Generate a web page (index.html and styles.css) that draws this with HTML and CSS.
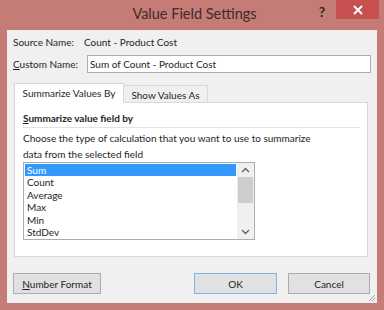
FILE: index.html
```html
<!DOCTYPE html>
<html lang="en">
<head>
    <meta charset="UTF-8">
    <title>Value Field Settings</title>
    <link rel="stylesheet" href="styles.css">
</head>
<body>
    <div class="window">
        <div class="titlebar">
            <div class="title">Value Field Settings</div>
            <div class="help">?</div>
            <div class="close">
                <svg width="10" height="10" viewBox="0 0 10 10"><path d="M1 1L9 9M9 1L1 9" stroke="#fff" stroke-width="2"/></svg>
            </div>
        </div>
        <div class="content">
            <div class="source-row">
                <span class="label">Source Name:</span>
                <span>Count - Product Cost</span>
            </div>
            <div class="custom-row">
                <label class="label" for="customName"><u>C</u>ustom Name:</label>
                <input type="text" id="customName" value="Sum of Count - Product Cost">
            </div>

            <div class="tabs">
                <div class="tab active">Summarize Values By</div>
                <div class="tab">Show Values As</div>
            </div>
            <div class="panel">
                <div class="panel-heading"><u>S</u>ummarize value field by</div>
                <p class="hint">Choose the type of calculation that you want to use to summarize<br>data from the selected field</p>
                <div class="listbox">
                    <ul class="items">
                        <li class="selected">Sum</li>
                        <li>Count</li>
                        <li>Average</li>
                        <li>Max</li>
                        <li>Min</li>
                        <li>StdDev</li>
                    </ul>
                    <div class="scrollbar">
                        <svg width="17" height="14" viewBox="0 0 17 14"><path d="M5 9L8.5 5.5L12 9" fill="none" stroke="#606060" stroke-width="1.3"/></svg>
                        <div class="thumb"></div>
                        <div class="track"></div>
                        <svg width="17" height="14" viewBox="0 0 17 14"><path d="M5 5L8.5 8.5L12 5" fill="none" stroke="#606060" stroke-width="1.3"/></svg>
                    </div>
                </div>
            </div>

            <div class="buttons">
                <button class="btn number"><u>N</u>umber Format</button>
                <button class="btn ok">OK</button>
                <button class="btn cancel">Cancel</button>
            </div>
            <div class="grip">
                <svg width="8" height="8" viewBox="0 0 8 8"><path d="M7 1L1 7M7 4L4 7" stroke="#a0a0a0" stroke-width="1"/></svg>
            </div>
        </div>
    </div>
</body>
</html>
```

FILE: styles.css
```css
body {
    margin: 0;
    padding: 0;
    font-family: Lato, 'Noto Sans', sans-serif;
    font-size: 10px;
    color: rgb(30, 30, 30);
}
.window {
    width: 384px;
    height: 310px;
    box-sizing: border-box;
    background-color: rgb(197, 124, 118);
    padding: 0 7px 7px 7px;
    display: flex;
    flex-direction: column;
}
.titlebar {
    height: 30px;
    display: flex;
    align-items: flex-start;
}
.title {
    flex: 1;
    text-align: center;
    font-size: 14.5px;
    line-height: 28px;
    color: rgb(64, 42, 42);
    padding-left: 70px;
}
.help {
    width: 20px;
    text-align: center;
    font-size: 14px;
    font-weight: bold;
    line-height: 24px;
    color: rgb(50, 40, 40);
    margin-right: 4px;
}
.close {
    width: 43px;
    height: 19px;
    margin-right: -2px;
    background-color: rgb(199, 80, 80);
    display: flex;
    align-items: center;
    justify-content: center;
}
.content {
    flex: 1;
    background-color: rgb(240, 240, 240);
    padding: 0 6px;
    position: relative;
    white-space: nowrap;
}
.source-row {
    height: 24px;
    line-height: 24px;
    display: flex;
}
.label {
    width: 71px;
    flex-shrink: 0;
}
.custom-row {
    margin-top: 1px;
    height: 18px;
    display: flex;
    align-items: center;
}
.custom-row .label {
    width: 74px;
}
.custom-row input {
    flex: 1;
    height: 18px;
    box-sizing: border-box;
    margin: 0;
    border: 1px solid rgb(171, 173, 179);
    padding: 0 2px;
    font-family: inherit;
    font-size: 10px;
    color: rgb(30, 30, 30);
    background-color: white;
}
.tabs {
    margin-top: 10px;
    margin-left: 1px;
    height: 19px;
    display: flex;
    align-items: flex-end;
    position: relative;
    z-index: 1;
}
.tab {
    box-sizing: border-box;
    border: 1px solid rgb(217, 217, 217);
    border-bottom: none;
    text-align: center;
}
.tab.active {
    width: 110px;
    height: 20px;
    line-height: 19px;
    background-color: white;
    margin-bottom: -1px;
}
.tab:not(.active) {
    width: 84px;
    height: 17px;
    line-height: 19px;
    background-color: rgb(240, 240, 240);
    border-left: none;
}
.panel {
    margin-left: 1px;
    width: 354px;
    height: 155px;
    box-sizing: border-box;
    background-color: white;
    border: 1px solid rgb(217, 217, 217);
    padding: 7px 8px 0 8px;
}
.panel-heading {
    font-weight: bold;
    line-height: 17px;
    padding-bottom: 0;
    border-bottom: 1px solid rgb(226, 226, 226);
    margin-right: -1px;
}
.hint {
    margin: 3px 0 0 0;
    line-height: 15.5px;
}
.listbox {
    margin-top: 0;
    width: 232px;
    height: 78px;
    box-sizing: border-box;
    border: 1px solid rgb(171, 173, 179);
    display: flex;
}
.items {
    list-style: none;
    margin: 0;
    padding: 1px;
    flex: 1;
}
.items li {
    height: 12.4px;
    line-height: 12.4px;
    padding-left: 2px;
}
.items li.selected {
    background-color: rgb(51, 153, 255);
    color: white;
}
.scrollbar {
    width: 17px;
    background-color: rgb(240, 240, 240);
    display: flex;
    flex-direction: column;
}
.scrollbar svg {
    display: block;
}
.thumb {
    height: 26px;
    margin: 0 1px;
    background-color: rgb(205, 205, 205);
}
.track {
    flex: 1;
}
.buttons {
    margin-top: 16px;
    display: flex;
}
.btn {
    height: 21px;
    box-sizing: border-box;
    background-color: rgb(225, 225, 225);
    border: 1px solid rgb(173, 173, 173);
    font-family: inherit;
    font-size: 10px;
    color: rgb(30, 30, 30);
    padding: 0;
}
.btn.number {
    width: 88px;
}
.btn.ok {
    width: 83px;
    margin-left: 93px;
    border-color: rgb(126, 180, 234);
}
.btn.cancel {
    width: 82px;
    margin-left: 11px;
}
.grip {
    position: absolute;
    right: 1px;
    bottom: 1px;
    line-height: 0;
}
```
